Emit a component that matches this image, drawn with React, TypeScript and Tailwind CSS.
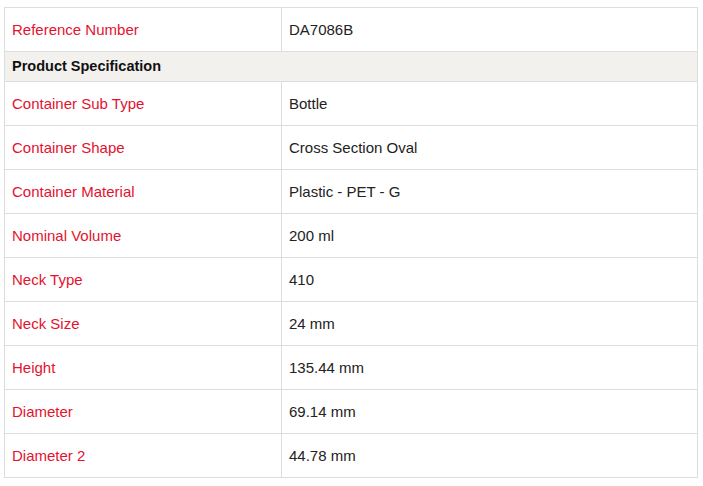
import React from "react";

const rows: [string, string][] = [
  ["Container Sub Type", "Bottle"],
  ["Container Shape", "Cross Section Oval"],
  ["Container Material", "Plastic - PET - G"],
  ["Nominal Volume", "200 ml"],
  ["Neck Type", "410"],
  ["Neck Size", "24 mm"],
  ["Height", "135.44 mm"],
  ["Diameter", "69.14 mm"],
  ["Diameter 2", "44.78 mm"],
];

function Row({ label, value }: { label: string; value: string }) {
  return (
    <div className="flex h-[44px] border-b border-[#dddddd]">
      <div className="w-[277px] border-r border-[#dddddd] pl-[7px] pt-[2px] flex items-center text-[#e4122f]">
        {label}
      </div>
      <div className="flex-1 pl-[7px] pt-[2px] flex items-center text-[#222222]">{value}</div>
    </div>
  );
}

export default function App() {
  return (
    <div
      className="bg-white w-[703px] h-[486px] pt-[7px] pl-[4px] text-[15px]"
      style={{ fontFamily: '"Liberation Sans", Arial, sans-serif' }}
    >
      <div className="w-[694px] border-l border-r border-t border-[#dddddd]">
        <Row label="Reference Number" value="DA7086B" />
        <div className="h-[30px] border-b border-[#dddddd] bg-[#f2f1ee] pl-[7px] pt-[1px] flex items-center font-bold text-[14.5px] text-[#111111]">
          Product Specification
        </div>
        {rows.map(([l, v]) => (
          <Row key={l} label={l} value={v} />
        ))}
      </div>
    </div>
  );
}
